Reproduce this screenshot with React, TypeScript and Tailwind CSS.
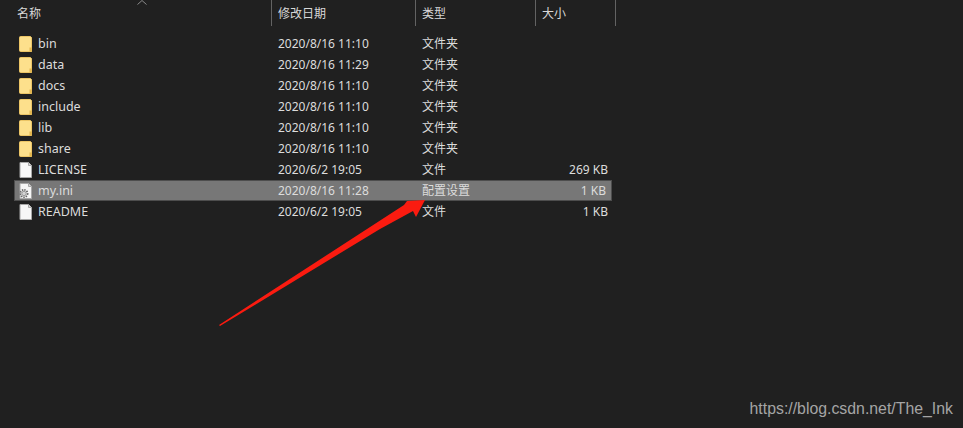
const FONT = 'font-["Noto_Sans","Noto_Sans_CJK_SC",sans-serif]'

type Row = { name: string; date: string; type: string; size?: string; kind: 'folder' | 'file' | 'ini' }

const rows: Row[] = [
  { name: 'bin', date: '2020/8/16 11:10', type: '文件夹', kind: 'folder' },
  { name: 'data', date: '2020/8/16 11:29', type: '文件夹', kind: 'folder' },
  { name: 'docs', date: '2020/8/16 11:10', type: '文件夹', kind: 'folder' },
  { name: 'include', date: '2020/8/16 11:10', type: '文件夹', kind: 'folder' },
  { name: 'lib', date: '2020/8/16 11:10', type: '文件夹', kind: 'folder' },
  { name: 'share', date: '2020/8/16 11:10', type: '文件夹', kind: 'folder' },
  { name: 'LICENSE', date: '2020/6/2 19:05', type: '文件', size: '269 KB', kind: 'file' },
  { name: 'my.ini', date: '2020/8/16 11:28', type: '配置设置', size: '1 KB', kind: 'ini' },
  { name: 'README', date: '2020/6/2 19:05', type: '文件', size: '1 KB', kind: 'file' },
]

function FolderIcon() {
  return (
    <svg width="14" height="16" viewBox="0 0 14 16" className="shrink-0">
      <path d="M1.5 0.5H11.5L12.5 1.5V15.5H1.5C0.9 15.5 0.5 15.1 0.5 14.5V1.5C0.5 0.9 0.9 0.5 1.5 0.5Z" fill="#fde08c" stroke="#ecc566" />
      <path d="M10.5 15.5V11.5H13V15.5Z" fill="#e3b64f" />
    </svg>
  )
}

function FileIcon({ gear }: { gear?: boolean }) {
  return (
    <svg width="14" height="16" viewBox="0 0 14 16" className="shrink-0">
      <path d="M1 0.5H9.5L12.5 3.5V15.5H1Z" fill="#f7f7f7" stroke="#a8a8a8" />
      <path d="M9.5 0.5V3.5H12.5" fill="#d8d8d8" stroke="#a8a8a8" />
      {gear && (
        <g>
          <circle cx="5" cy="10.5" r="3.6" fill="none" stroke="#666" strokeWidth="1.8" strokeDasharray="1.4 1" />
          <circle cx="5" cy="10.5" r="2.2" fill="#d4d4d4" stroke="#888" strokeWidth="0.8" />
        </g>
      )}
    </svg>
  )
}

export default function App() {
  return (
    <div className={`relative h-[428px] w-[963px] overflow-hidden bg-[#202020] text-[12px] text-[#dcdcdc] ${FONT}`}>
      {/* column headers */}
      <div className="grid h-[26px] grid-cols-[271px_144px_120px_80px_1fr] items-center leading-none">
        <div className="relative h-full pl-[17px] pt-[8px] text-[#d8d8d8]">
          名称
          <svg width="10" height="5" viewBox="0 0 10 5" className="absolute left-[137px] top-0">
            <path d="M0.5 4.5L5 0.5L9.5 4.5" fill="none" stroke="#8a8a8a" />
          </svg>
        </div>
        <div className="h-full border-l border-[#636363] pl-[6px] pt-[8px] text-[#d8d8d8]">修改日期</div>
        <div className="h-full border-l border-[#636363] pl-[6px] pt-[8px] text-[#d8d8d8]">类型</div>
        <div className="h-full border-l border-[#636363] pl-[6px] pt-[8px] text-[#d8d8d8]">大小</div>
        <div className="h-full border-l border-[#636363]" />
      </div>

      {/* file rows */}
      <div className="ml-[14px] mt-[7px] flex w-[598px] flex-col">
        {rows.map((row) => (
          <div
            key={row.name}
            className={`grid h-[21px] grid-cols-[257px_144px_120px_1fr] items-center ${
              row.kind === 'ini' ? 'border border-[#4d4d4d] bg-[#777777] [&>div]:-translate-x-px' : ''
            }`}
          >
            <div className="flex items-center gap-[4px] pl-[5px]">
              {row.kind === 'folder' ? <FolderIcon /> : <FileIcon gear={row.kind === 'ini'} />}
              <span className="ml-[1px] text-[12.5px] leading-[18px]">{row.name}</span>
            </div>
            <div className="pl-[7px]">{row.date}</div>
            <div className="pl-[7px]">{row.type}</div>
            <div className="pr-[4px] text-right">{row.size}</div>
          </div>
        ))}
      </div>

      {/* red annotation arrow */}
      <svg width="963" height="428" viewBox="0 0 963 428" className="absolute left-0 top-0">
        <polygon points="219,325 404,205 407,201 425,200 416,217 413,211 380,229 220,326" fill="#fb1b10" />
      </svg>

      {/* blog watermark */}
      <div className="absolute right-[10px] top-[399px] font-['Liberation_Sans',sans-serif] text-[15.85px] leading-5 text-[#a5a5a5]">
        https://blog.csdn.net/The_Ink
      </div>
    </div>
  )
}
